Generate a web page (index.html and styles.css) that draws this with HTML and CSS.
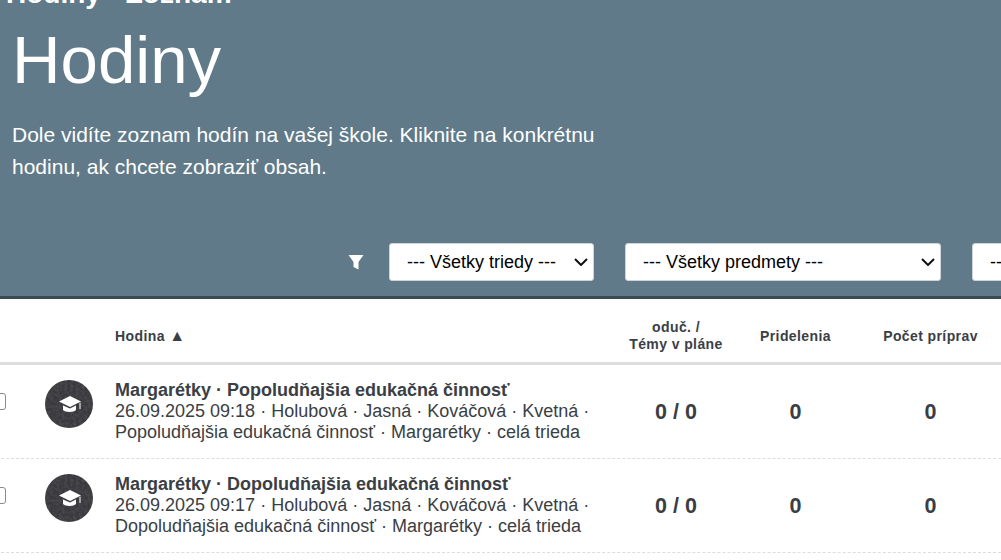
FILE: index.html
```html
<!DOCTYPE html>
<html lang="sk">
<head>
<meta charset="utf-8">
<title>Hodiny</title>
<link rel="stylesheet" href="styles.css">
</head>
<body>
<header class="hero">
  <div class="crumb">Hodiny · Zoznam</div>
  <h1 class="title">Hodiny</h1>
  <p class="lead">Dole vidíte zoznam hodín na vašej škole. Kliknite na konkrétnu hodinu, ak chcete zobraziť obsah.</p>
  <div class="filters">
    <svg class="filter-icon" viewBox="0 0 16 16" aria-hidden="true"><path d="M0.5 1h15L10.500 8V15.500L5.500 13V8z"/></svg>
    <div class="select s1"><span>--- Všetky triedy ---</span><svg class="chev" viewBox="0 0 14 8"><path d="M1 1l6 6 6-6"/></svg></div>
    <div class="select s2"><span>--- Všetky predmety ---</span><svg class="chev" viewBox="0 0 14 8"><path d="M1 1l6 6 6-6"/></svg></div>
    <div class="select s3"><span>--- Všetci učitelia ---</span></div>
  </div>
</header>
<main class="list">
  <div class="row head">
    <div></div>
    <div></div>
    <div class="th-left">Hodina <span class="sort">▲</span></div>
    <div class="th">oduč. /<br>Témy v pláne</div>
    <div class="th">Pridelenia</div>
    <div class="th">Počet príprav</div>
  </div>
  <div class="row item">
    <div class="check"><span class="box"></span></div>
    <div class="avatar-cell">
      <svg class="avatar" viewBox="0 0 48 48" aria-hidden="true">
        <defs>
          <filter id="chalk" x="0" y="0" width="100%" height="100%" color-interpolation-filters="sRGB">
            <feTurbulence type="fractalNoise" baseFrequency="0.35" numOctaves="2" seed="4"/>
            <feColorMatrix values="0 0 0 0 1  0 0 0 0 1  0 0 0 0 1  0 0 0 0.18 -0.05"/>
            <feComposite in2="SourceGraphic" operator="in"/>
            <feMerge><feMergeNode in="SourceGraphic"/><feMergeNode/></feMerge>
          </filter>
        </defs>
        <circle class="disc" cx="24" cy="24" r="24" filter="url(#chalk)"/>
        <path class="cap" d="M25 16L14 21.500 25 27 36 21.500z"/>
        <path class="cap" d="M18 25.500v4.500c2 2.500 11 2.500 13 0v-4.500l-6 3z"/>
        <path class="cap" d="M34.500 23v6h1v-6.500z"/>
      </svg>
    </div>
    <div class="info">
      <div class="name">Margarétky · Popoludňajšia edukačná činnosť</div>
      <div class="meta">26.09.2025 09:18 · Holubová · Jasná · Kováčová · Kvetná · Popoludňajšia edukačná činnosť · Margarétky · celá trieda</div>
    </div>
    <div class="num">0 / 0</div>
    <div class="num">0</div>
    <div class="num">0</div>
  </div>
  <div class="row item">
    <div class="check"><span class="box"></span></div>
    <div class="avatar-cell">
      <svg class="avatar" viewBox="0 0 48 48" aria-hidden="true">
        <circle class="disc" cx="24" cy="24" r="24" filter="url(#chalk)"/>
        <path class="cap" d="M25 16L14 21.500 25 27 36 21.500z"/>
        <path class="cap" d="M18 25.500v4.500c2 2.500 11 2.500 13 0v-4.500l-6 3z"/>
        <path class="cap" d="M34.500 23v6h1v-6.500z"/>
      </svg>
    </div>
    <div class="info">
      <div class="name">Margarétky · Dopoludňajšia edukačná činnosť</div>
      <div class="meta">26.09.2025 09:17 · Holubová · Jasná · Kováčová · Kvetná · Dopoludňajšia edukačná činnosť · Margarétky · celá trieda</div>
    </div>
    <div class="num">0 / 0</div>
    <div class="num">0</div>
    <div class="num">0</div>
  </div>
</main>
</body>
</html>
```
FILE: styles.css
```css
* { box-sizing: border-box; }
html, body { height: 100%; }
body {
  margin: 0;
  overflow: hidden;
  background: #fff;
  font-family: "Liberation Sans", Arial, sans-serif;
  color: #3a3e45;
}
.hero {
  margin-top: -22px;
  height: 321px;
  padding: 0 0 0 12px;
  background: #607a89;
  border-bottom: 3px solid #3b4b53;
  color: #fff;
  overflow: hidden;
}
.crumb {
  height: 25px;
  padding-top: 6px;
  margin-left: -6px;
  font-size: 28px;
  line-height: 20px;
  font-weight: 700;
  white-space: nowrap;
}
.title {
  margin: 0;
  padding-top: 20px;
  font-size: 67.200px;
  line-height: 74px;
  font-weight: 400;
}
.lead {
  width: 600px;
  margin: 22px 0 0;
  font-size: 21px;
  line-height: 32px;
}
.filters {
  display: flex;
  align-items: center;
  gap: 31px;
  margin: 60px 0 0 336px;
  width: 800px;
}
.filter-icon { width: 16px; height: 16px; flex: none; fill: #fff; margin-right: -6px; }
.select {
  flex: none;
  display: flex;
  align-items: center;
  justify-content: space-between;
  height: 38px;
  padding: 0 5px 0 17px;
  background: #fff;
  border: 1px solid #cfd4d8;
  border-radius: 3px;
  color: #000;
  font-size: 18px;
}
.s1 { width: 205px; }
.s2 { width: 316px; }
.s3 { width: 300px; }
.chev { width: 14px; height: 8px; fill: none; stroke: #111; stroke-width: 2; }
.list { margin-left: -14px; }
.row {
  display: grid;
  grid-template-columns: 50px 79px 490px 142px 97px 173px;
  align-items: center;
}
.head { height: 66px; padding-top: 10px; border-bottom: 3px solid #ddd; font-size: 14px; font-weight: 700; letter-spacing: .4px; }
.sort { font-size: 16px; letter-spacing: 0; }
.th { text-align: center; line-height: 17px; padding-top: 1px; }
.th-left { white-space: nowrap; }
.item { height: 94px; border-bottom: 1px dashed #ddd; }
.check { display: flex; justify-content: flex-end; align-self: start; padding: 28px 30px 0 0; }
.box { width: 14px; height: 17px; border: 1px solid #8a8a8a; border-radius: 3px; background: #fff; }
.avatar-cell { display: flex; align-self: start; padding: 15px 0 0 9px; }
.avatar { width: 48px; height: 48px; flex: none; }
.disc { fill: #38383c; }
.cap { fill: #fff; }
.info { font-size: 18px; line-height: 21px; padding-right: 10px; }
.name { font-weight: 700; }
.num { padding-top: 2px; text-align: center; font-size: 21.500px; font-weight: 700; }
```
